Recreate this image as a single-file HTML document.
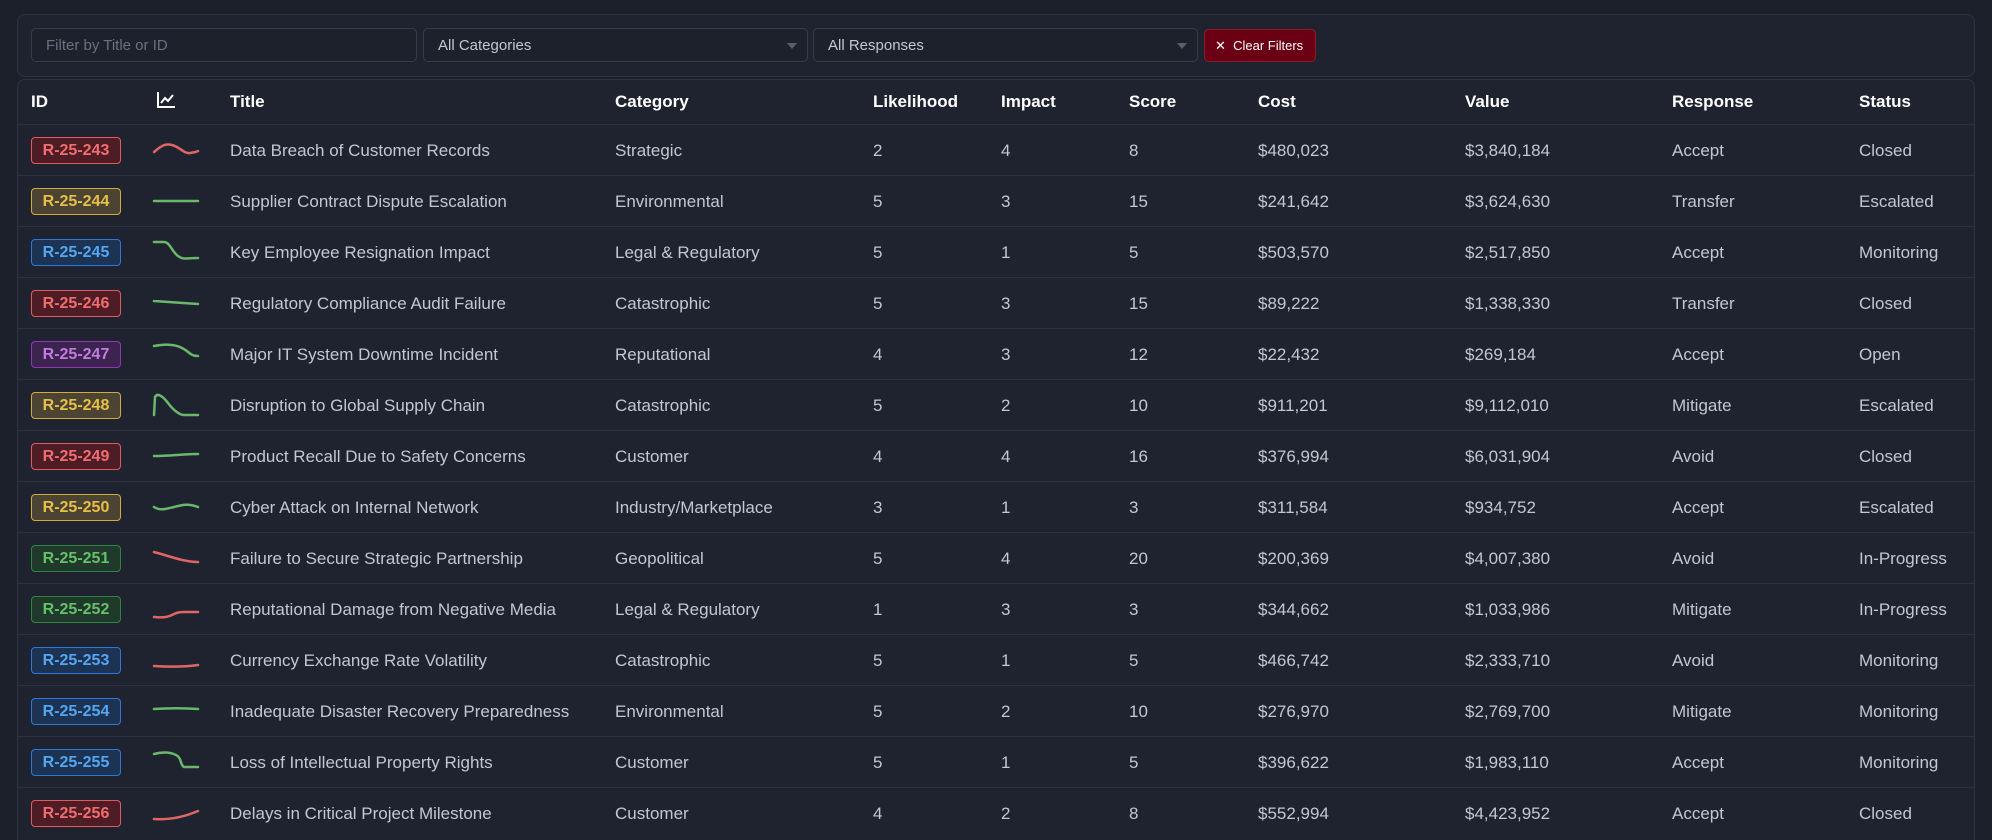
<!DOCTYPE html>
<html><head><meta charset="utf-8"><style>
*{box-sizing:border-box;margin:0;padding:0}
html,body{width:1992px;height:840px;overflow:hidden}
body{background:#1c202a;font-family:"Liberation Sans",sans-serif;color:#c3c7cf;position:relative}
.panel{position:absolute;left:17px;right:17px;border:1px solid #2d3242;background:#1f2330;border-radius:8px}
.inp{position:absolute;top:28px;height:34px;border:1px solid #363b4a;border-radius:5px;background:#1d212c;font-size:15px;line-height:34px;padding-left:14px}
.caret{position:absolute;right:10px;top:14px;width:0;height:0;border-left:5px solid transparent;border-right:5px solid transparent;border-top:6px solid #5a5f6c}
.btn{position:absolute;left:1204px;top:29px;width:112px;height:33px;background:#6b0014;border:1px solid #8a1a2a;border-radius:5px;color:#fff;font-size:13px;line-height:32px;padding-left:10px}
.c{position:absolute;font-size:17px;white-space:nowrap}
.h{font-weight:bold;color:#fff}
.line{position:absolute;left:18px;right:18px;height:1px;background:#2b303d}
.b{position:absolute;left:31px;width:90px;height:27px;border:1px solid;border-radius:4px;font-weight:bold;font-size:16px;text-align:center;line-height:26px}
.r{background:#4d1c25;border-color:#e05a5f;color:#f26d6f}
.y{background:#4b4433;border-color:#d2ab40;color:#e8bf48}
.bl{background:#1d3353;border-color:#2b78d8;color:#55a6f2}
.p{background:#3d2350;border-color:#8e38b4;color:#c47ce0}
.g{background:#1f3a2a;border-color:#2f8440;color:#66c06a}
svg.s{position:absolute;left:154px;width:44px;height:28px;overflow:visible}
svg.s path{fill:none;stroke-width:2.5;stroke-linecap:round}
</style></head><body>
<div class="panel" style="top:14px;height:63px"></div>
<div class="inp" style="left:31px;width:386px;color:#6b7080">Filter by Title or ID</div>
<div class="inp" style="left:423px;width:385px;color:#c3c7cf">All Categories<div class="caret"></div></div>
<div class="inp" style="left:813px;width:385px;color:#c3c7cf">All Responses<div class="caret"></div></div>
<div class="btn">✕&nbsp; Clear Filters</div>
<div class="panel" style="top:79px;height:780px"></div>

<div class="c h" style="left:31px;top:92px">ID</div>
<svg style="position:absolute;left:156px;top:91px" width="20" height="18" viewBox="0 0 20 18"><path d="M2 1V16H19" stroke="#fff" stroke-width="2" fill="none"/><path d="M5 12L9 7L12 10L17 4" stroke="#fff" stroke-width="2" fill="none"/></svg>
<div class="c h" style="left:230px;top:92px">Title</div>
<div class="c h" style="left:615px;top:92px">Category</div>
<div class="c h" style="left:873px;top:92px">Likelihood</div>
<div class="c h" style="left:1001px;top:92px">Impact</div>
<div class="c h" style="left:1129px;top:92px">Score</div>
<div class="c h" style="left:1258px;top:92px">Cost</div>
<div class="c h" style="left:1465px;top:92px">Value</div>
<div class="c h" style="left:1672px;top:92px">Response</div>
<div class="c h" style="left:1859px;top:92px">Status</div>
<div class="line" style="top:124px"></div>

<div id="rows"></div>
<script>
var R=[
["R-25-243","r","#e06666","M0 16 C6 11,10 7,18 9 S30 18,36 17 S42 16,44 15","Data Breach of Customer Records","Strategic","2","4","8","$480,023","$3,840,184","Accept","Closed"],
["R-25-244","y","#6ab86a","M0 14 H44","Supplier Contract Dispute Escalation","Environmental","5","3","15","$241,642","$3,624,630","Transfer","Escalated"],
["R-25-245","bl","#6ab86a","M0 4 H10 C16 4,18 14,24 18 S30 20,44 20","Key Employee Resignation Impact","Legal & Regulatory","5","1","5","$503,570","$2,517,850","Accept","Monitoring"],
["R-25-246","r","#6ab86a","M0 12 C15 13,30 14,44 15","Regulatory Compliance Audit Failure","Catastrophic","5","3","15","$89,222","$1,338,330","Transfer","Closed"],
["R-25-247","p","#6ab86a","M0 6 C10 4,20 4,28 8 S36 16,44 16","Major IT System Downtime Incident","Reputational","4","3","12","$22,432","$269,184","Accept","Open"],
["R-25-248","y","#6ab86a","M0 24 L1 6 C3 2,8 4,14 12 S26 24,30 24 H44","Disruption to Global Supply Chain","Catastrophic","5","2","10","$911,201","$9,112,010","Mitigate","Escalated"],
["R-25-249","r","#6ab86a","M0 14 C15 14,30 12,44 12","Product Recall Due to Safety Concerns","Customer","4","4","16","$376,994","$6,031,904","Avoid","Closed"],
["R-25-250","y","#6ab86a","M0 14 C6 18,12 16,20 14 S34 10,44 14","Cyber Attack on Internal Network","Industry/Marketplace","3","1","3","$311,584","$934,752","Accept","Escalated"],
["R-25-251","g","#e06666","M0 8 C15 12,30 18,44 18","Failure to Secure Strategic Partnership","Geopolitical","5","4","20","$200,369","$4,007,380","Avoid","In-Progress"],
["R-25-252","g","#e06666","M0 22 C8 23,14 22,18 20 S24 17,30 17 H44","Reputational Damage from Negative Media","Legal & Regulatory","1","3","3","$344,662","$1,033,986","Mitigate","In-Progress"],
["R-25-253","bl","#e06666","M0 20 C15 21,30 21,44 19","Currency Exchange Rate Volatility","Catastrophic","5","1","5","$466,742","$2,333,710","Avoid","Monitoring"],
["R-25-254","bl","#6ab86a","M0 12 C15 11,30 11,44 12","Inadequate Disaster Recovery Preparedness","Environmental","5","2","10","$276,970","$2,769,700","Mitigate","Monitoring"],
["R-25-255","bl","#6ab86a","M0 6 C8 4,16 4,22 7 S26 17,30 19 H44","Loss of Intellectual Property Rights","Customer","5","1","5","$396,622","$1,983,110","Accept","Monitoring"],
["R-25-256","r","#e06666","M0 20 C15 21,30 18,44 12","Delays in Critical Project Milestone","Customer","4","2","8","$552,994","$4,423,952","Accept","Closed"]];
var X=[230,615,873,1001,1129,1258,1465,1672,1859],h="";
R.forEach(function(r,i){var cy=150+i*51;
h+='<div class="b '+r[1]+'" style="top:'+(cy-13)+'px">'+r[0]+'</div>';
h+='<svg class="s" style="top:'+(cy-14)+'px" viewBox="0 0 44 28"><path d="'+r[3]+'" stroke="'+r[2]+'"/></svg>';
for(var k=0;k<9;k++)h+='<div class="c" style="left:'+X[k]+'px;top:'+(cy-9)+'px">'+r[4+k].replace("&","&amp;")+'</div>';
if(i<13)h+='<div class="line" style="top:'+(cy+25)+'px"></div>';});
document.getElementById("rows").innerHTML=h;
</script>
</body></html>
